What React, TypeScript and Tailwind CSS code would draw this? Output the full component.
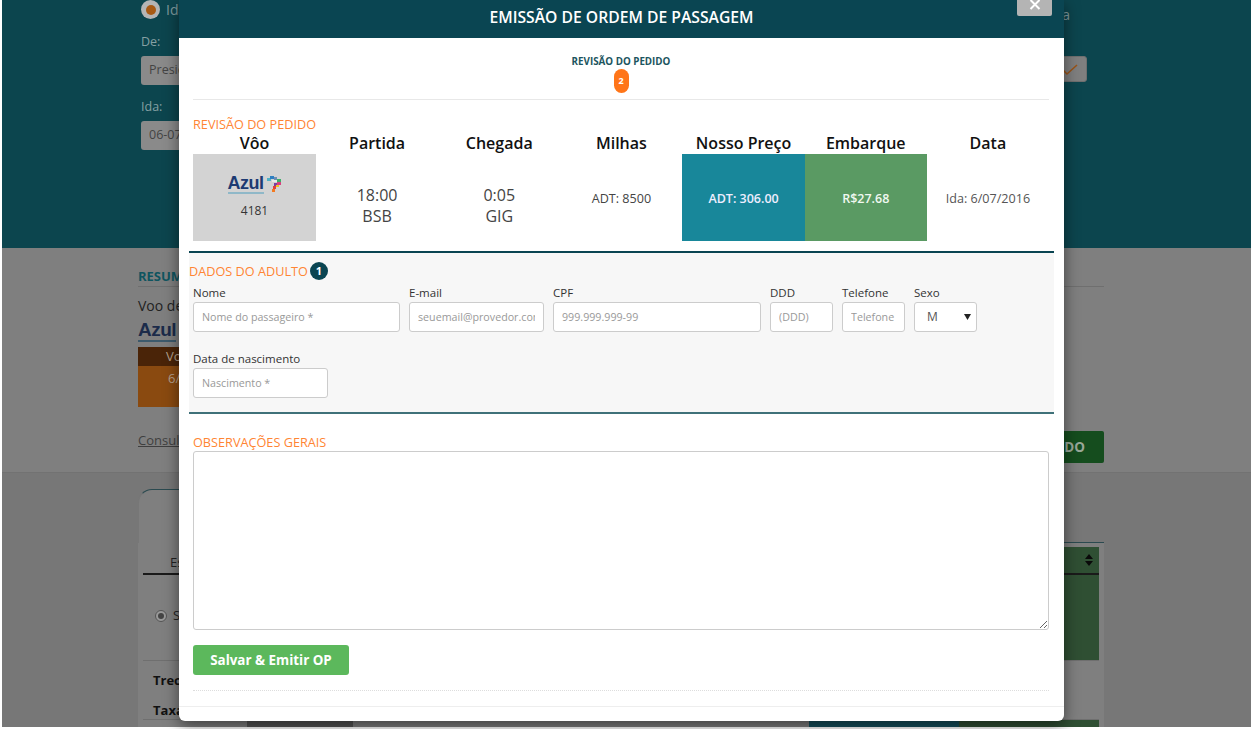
import React from 'react';

const fields = [
  { label: 'Nome', placeholder: 'Nome do passageiro *', width: 'w-[207px]' },
  { label: 'E-mail', placeholder: 'seuemail@provedor.com', width: 'w-[135px]' },
  { label: 'CPF', placeholder: '999.999.999-99', width: 'w-[208px]' },
  { label: 'DDD', placeholder: '(DDD)', width: 'w-[63px]' },
  { label: 'Telefone', placeholder: 'Telefone', width: 'w-[63px]' },
];

const AzulLogo = ({ large = false }: { large?: boolean }) => (
  <div className="flex items-start gap-[3px]">
    <div className="flex flex-col">
      <span
        className={
          large
            ? "text-[19px] leading-[20px] font-bold tracking-[-0.5px] text-[#1b2b4a] [font-family:'Liberation_Sans',sans-serif]"
            : "text-[18px] leading-[18px] font-bold tracking-[-0.5px] text-[#1d3a72] [font-family:'Liberation_Sans',sans-serif]"
        }
      >
        Azul
      </span>
      <div className={large ? 'h-[2px] bg-[#3d5a6c]' : 'h-[2px] bg-[#8fb8c8]'} />
    </div>
    {!large && (
      <svg width="15" height="17" viewBox="0 0 15 17" className="mt-[1px]">
        <rect x="0" y="3" width="4" height="3" fill="#4fb3c8" />
        <rect x="3" y="1" width="4" height="3" fill="#2f7fc1" />
        <rect x="7" y="2" width="3" height="3" fill="#6d8fb5" />
        <rect x="5" y="5" width="5" height="2" fill="#e9e9e9" />
        <rect x="10" y="4" width="4" height="3" fill="#3cae6b" />
        <rect x="10" y="7" width="4" height="3" fill="#d9407f" />
        <rect x="7" y="8" width="3" height="3" fill="#7a3fa0" />
        <rect x="9" y="10" width="3" height="2" fill="#f4c020" />
        <rect x="6" y="11" width="3" height="3" fill="#e2403a" />
        <rect x="5" y="14" width="3" height="3" fill="#f47a20" />
      </svg>
    )}
  </div>
);

const Field = ({ label, placeholder, width }: { label: string; placeholder: string; width: string }) => (
  <div className={`flex flex-col ${width}`}>
    <label className="mb-[1px] text-[11.5px] leading-[16px] text-[#333]">{label}</label>
    <input
      placeholder={placeholder}
      className="h-[30px] w-full rounded-[3px] border border-[#ccc] bg-white px-[8px] text-[10.7px] placeholder:text-[#999]"
    />
  </div>
);

const Header = ({ children }: { children: React.ReactNode }) => (
  <div className="text-center text-[16px] leading-[22px] font-semibold text-[#111]">{children}</div>
);

export default function App() {
  return (
    <div className="relative h-[729px] w-[1253px] overflow-hidden bg-white text-[#222] [font-family:'Open_Sans',sans-serif]">
      {/* page behind the modal */}
      <div className="flex h-[727px] flex-col px-[2px]">
        <section className="h-[248px] bg-[#0c454e] pl-[139px] pr-[164px]">
          <div className="flex h-[28px] items-start justify-between text-[14px] text-[#7f9a9e]">
            <div className="flex items-center gap-[6px]">
              <span className="flex h-[19px] w-[19px] items-center justify-center rounded-full bg-[#b5b5b5]">
                <span className="h-[10px] w-[10px] rounded-full bg-[#a85a14]" />
              </span>
              <span className="leading-[19px]">Ida</span>
            </div>
            <span className="mr-[17px] mt-[4px]">Ida e volta</span>
          </div>
          <div className="mt-[5px] text-[12.5px] leading-[18px] text-[#86a0a3]">De:</div>
          <div className="mt-[5px] flex items-start justify-between">
            <div className="flex h-[29px] w-[300px] items-center rounded-[3px] bg-[#8a8a8a] pl-[8px] text-[12.5px] text-[#444]">
              Presidente
            </div>
            <div className="flex h-[26px] w-[36px] items-center justify-center rounded-[3px] border border-[#6f6f6f] bg-[#7f7f7f]">
              <svg width="20" height="20" viewBox="0 0 20 20" fill="none" stroke="#9a5418" strokeWidth="1.6">
                <path d="M3 10l5 5L18 6" />
              </svg>
            </div>
          </div>
          <div className="mt-[13px] text-[12.5px] leading-[18px] text-[#86a0a3]">Ida:</div>
          <div className="mt-[5px] flex h-[29px] w-[300px] items-center rounded-[3px] bg-[#8a8a8a] pl-[8px] text-[12.5px] text-[#444]">
            06-07-2016
          </div>
        </section>

        <section className="h-[225px] border-b border-[#727272] bg-[#7f7f7f] pl-[136px] pr-[147px] pt-[20px]">
          <div className="border-b border-[#6f6f6f] pb-[1px] text-[13px] leading-[17px] font-bold text-[#0f5560]">
            RESUMO
          </div>
          <div className="mt-[9px] text-[14px] leading-[20px] text-[#222]">Voo de ida</div>
          <div className="mt-[4px] h-[20px]">
            <AzulLogo large />
          </div>
          <div className="mt-[7px] w-[300px] text-[13px] text-[#b5a08c]">
            <div className="h-[19px] bg-[#4a2408] pl-[28px] leading-[19px]">Voo</div>
            <div className="h-[41px] bg-[#8a4a10] pl-[30px] leading-[24px]">6/07</div>
          </div>
          <div className="mt-[24px] flex items-start justify-between">
            <span className="text-[13px] text-[#3f3f3f] underline">Consulte as regras</span>
            <div className="flex h-[32px] w-[200px] items-center justify-end rounded-[2px] bg-[#154d1e] pr-[19px] text-[13.5px] font-bold text-[#9aa89a]">
              CONFIRMAR PEDIDO
            </div>
          </div>
        </section>

        <section className="flex-1 bg-[#777] pl-[136px] pr-[147px] pt-[16px]">
          <div className="relative z-10 -mb-[1px] h-[54px] w-[300px] rounded-tl-[14px] border-l border-t border-t-[#2b4a50] border-l-[#777] bg-[#7f7f7f]" />
          <div className="border-t border-[#2b4a50] bg-[#7f7f7f] px-[5px] pt-[4px]">
            <div className="flex h-[28px] items-end justify-between border-b-2 border-[#1a1a1a]">
              <span className="pb-[1px] pl-[27px] text-[13px] text-[#222]">Escolha</span>
              <div className="flex h-[26px] w-[200px] items-center justify-end gap-[5px] bg-[#2f4f33] pr-[5px]">
                <svg width="10" height="14" viewBox="0 0 10 14" fill="#0a0a0a">
                  <path d="M5 1l4 5H1zM5 13L1 8h8z" />
                </svg>
              </div>
            </div>
            <div className="flex h-[86px] items-center justify-between border-b border-[#6f6f6f]">
              <div className="flex items-center gap-[6px] pb-[4px] pl-[12px] text-[13px] text-[#222]">
                <span className="flex h-[12px] w-[12px] items-center justify-center rounded-full border border-[#555] bg-[#999]">
                  <span className="h-[6px] w-[6px] rounded-full bg-[#444]" />
                </span>
                Selecionar
              </div>
              <div className="h-full w-[200px] bg-[#2f4f33]" />
            </div>
            <div className="pl-[10px] pt-[10px] text-[13px] leading-[18px] font-bold text-[#111]">Trecho</div>
            <div className="border-b border-[#6f6f6f] pl-[10px] pt-[12px] text-[13px] leading-[18px] font-bold text-[#111]">Taxa</div>
            <div className="flex h-[7px] justify-between pl-[104px]">
              <div className="w-[106px] bg-[#555]" />
              <div className="flex w-[290px]">
                <div className="w-[150px] bg-[#14515e]" />
                <div className="flex-1 bg-[#2f4f33]" />
              </div>
            </div>
          </div>
        </section>
      </div>

      {/* modal */}
      <div className="absolute left-[179px] top-0 z-20 flex h-[721px] w-[885px] flex-col rounded-b-[6px] bg-white shadow-[0_5px_15px_rgba(0,0,0,0.5)]">
        <div className="relative flex h-[38px] items-center justify-center bg-[#0a4552] pb-[2px] text-[15.7px] font-semibold text-white">
          EMISSÃO DE ORDEM DE PASSAGEM
          <div className="absolute left-[838px] top-0 flex h-[16px] w-[35px] justify-center rounded-b-[2px] bg-[#b4b4b4]">
            <svg width="12" height="11" viewBox="0 0 12 11" fill="none" stroke="#fff" strokeWidth="2">
              <path d="M1.5 0L10.5 9M10.5 0L1.5 9" />
            </svg>
          </div>
        </div>

        <div className="ml-[14px] mr-[15px] flex h-[62px] flex-col items-center border-b border-[#e8e8e8] pt-[18px]">
          <div className="text-[9.8px] leading-[12px] font-bold text-[#1c5560]">REVISÃO DO PEDIDO</div>
          <div className="mt-[1px] flex h-[24px] w-[15px] items-center justify-center rounded-full bg-[#ff7518] text-[9px] font-bold text-white">
            2
          </div>
        </div>

        <div className="ml-[14px] mr-[15px] mt-[17px] text-[12.7px] leading-[15px] text-[#ff8533]">REVISÃO DO PEDIDO</div>
        <div className="ml-[14px] mr-[15px] grid grid-cols-[123px_repeat(6,1fr)]">
          <Header>Vôo</Header>
          <Header>Partida</Header>
          <Header>Chegada</Header>
          <Header>Milhas</Header>
          <Header>Nosso Preço</Header>
          <Header>Embarque</Header>
          <Header>Data</Header>
          <div className="flex h-[87px] flex-col items-center bg-[#d3d3d3] pt-[20px]">
            <AzulLogo />
            <span className="mt-[9px] text-[12px] leading-[16px] text-[#333]">4181</span>
          </div>
          <div className="flex flex-col items-center justify-center pt-[17px] text-[16px] leading-[21px] text-[#444]">
            <span>18:00</span>
            <span>BSB</span>
          </div>
          <div className="flex flex-col items-center justify-center pt-[17px] text-[16px] leading-[21px] text-[#444]">
            <span>0:05</span>
            <span>GIG</span>
          </div>
          <div className="flex items-center justify-center pt-[3px] text-[12.6px] text-[#444]">ADT: 8500</div>
          <div className="flex items-center justify-center bg-[#18879a] pt-[3px] text-[12.5px] font-semibold text-[#eef]">ADT: 306.00</div>
          <div className="flex items-center justify-center bg-[#5a9a63] pt-[3px] text-[12.5px] font-semibold text-[#f0f8f0]">R$27.68</div>
          <div className="flex items-center justify-center pt-[3px] text-[12.6px] text-[#555]">Ida: 6/07/2016</div>
        </div>

        <div className="mx-[10px] mt-[10px] h-[163px] border-y-2 border-t-[#0a4552] border-b-[#3f7179] bg-[#f7f7f7]">
          <div className="mt-[9px] flex items-center gap-[2px] text-[12.7px] leading-[18px] text-[#ff8533]">
            DADOS DO ADULTO
            <span className="flex h-[18px] w-[18px] items-center justify-center rounded-full bg-[#0a4552] text-[11px] font-bold text-white">
              1
            </span>
          </div>
          <div className="mt-[5px] flex gap-[9px] pl-[4px]">
            {fields.map((f) => (
              <Field key={f.label} {...f} />
            ))}
            <div className="flex w-[63px] flex-col">
              <label className="mb-[1px] text-[11.5px] leading-[16px] text-[#333]">Sexo</label>
              <div className="relative">
                <select className="h-[30px] w-full appearance-none rounded-[3px] border border-[#ccc] bg-white pl-[12px] text-[12px] text-[#555]">
                  <option>M</option>
                </select>
                <svg width="7" height="6" viewBox="0 0 7 6" fill="#222" className="absolute right-[6px] top-[12px]">
                  <path d="M0 0h7L3.5 6z" />
                </svg>
              </div>
            </div>
          </div>
          <div className="mt-[19px] pl-[4px]">
            <Field label="Data de nascimento" placeholder="Nascimento *" width="w-[135px]" />
          </div>
        </div>

        <div className="ml-[14px] mr-[15px] mt-[21px] text-[12.7px] leading-[14px] text-[#ff8533]">OBSERVAÇÕES GERAIS</div>
        <textarea className="ml-[14px] mr-[15px] mt-[2px] h-[179px] rounded-[3px] border border-[#ccc] bg-white" />
        <button className="ml-[14px] mt-[15px] h-[30px] w-[156px] rounded-[3px] bg-[#5cb85c] text-[13.4px] font-bold text-white">
          Salvar &amp; Emitir OP
        </button>
        <div className="ml-[14px] mr-[15px] mt-[15px] border-b border-dotted border-[#ddd]" />
        <div className="mt-[15px] border-b border-[#eee]" />
      </div>
    </div>
  );
}
